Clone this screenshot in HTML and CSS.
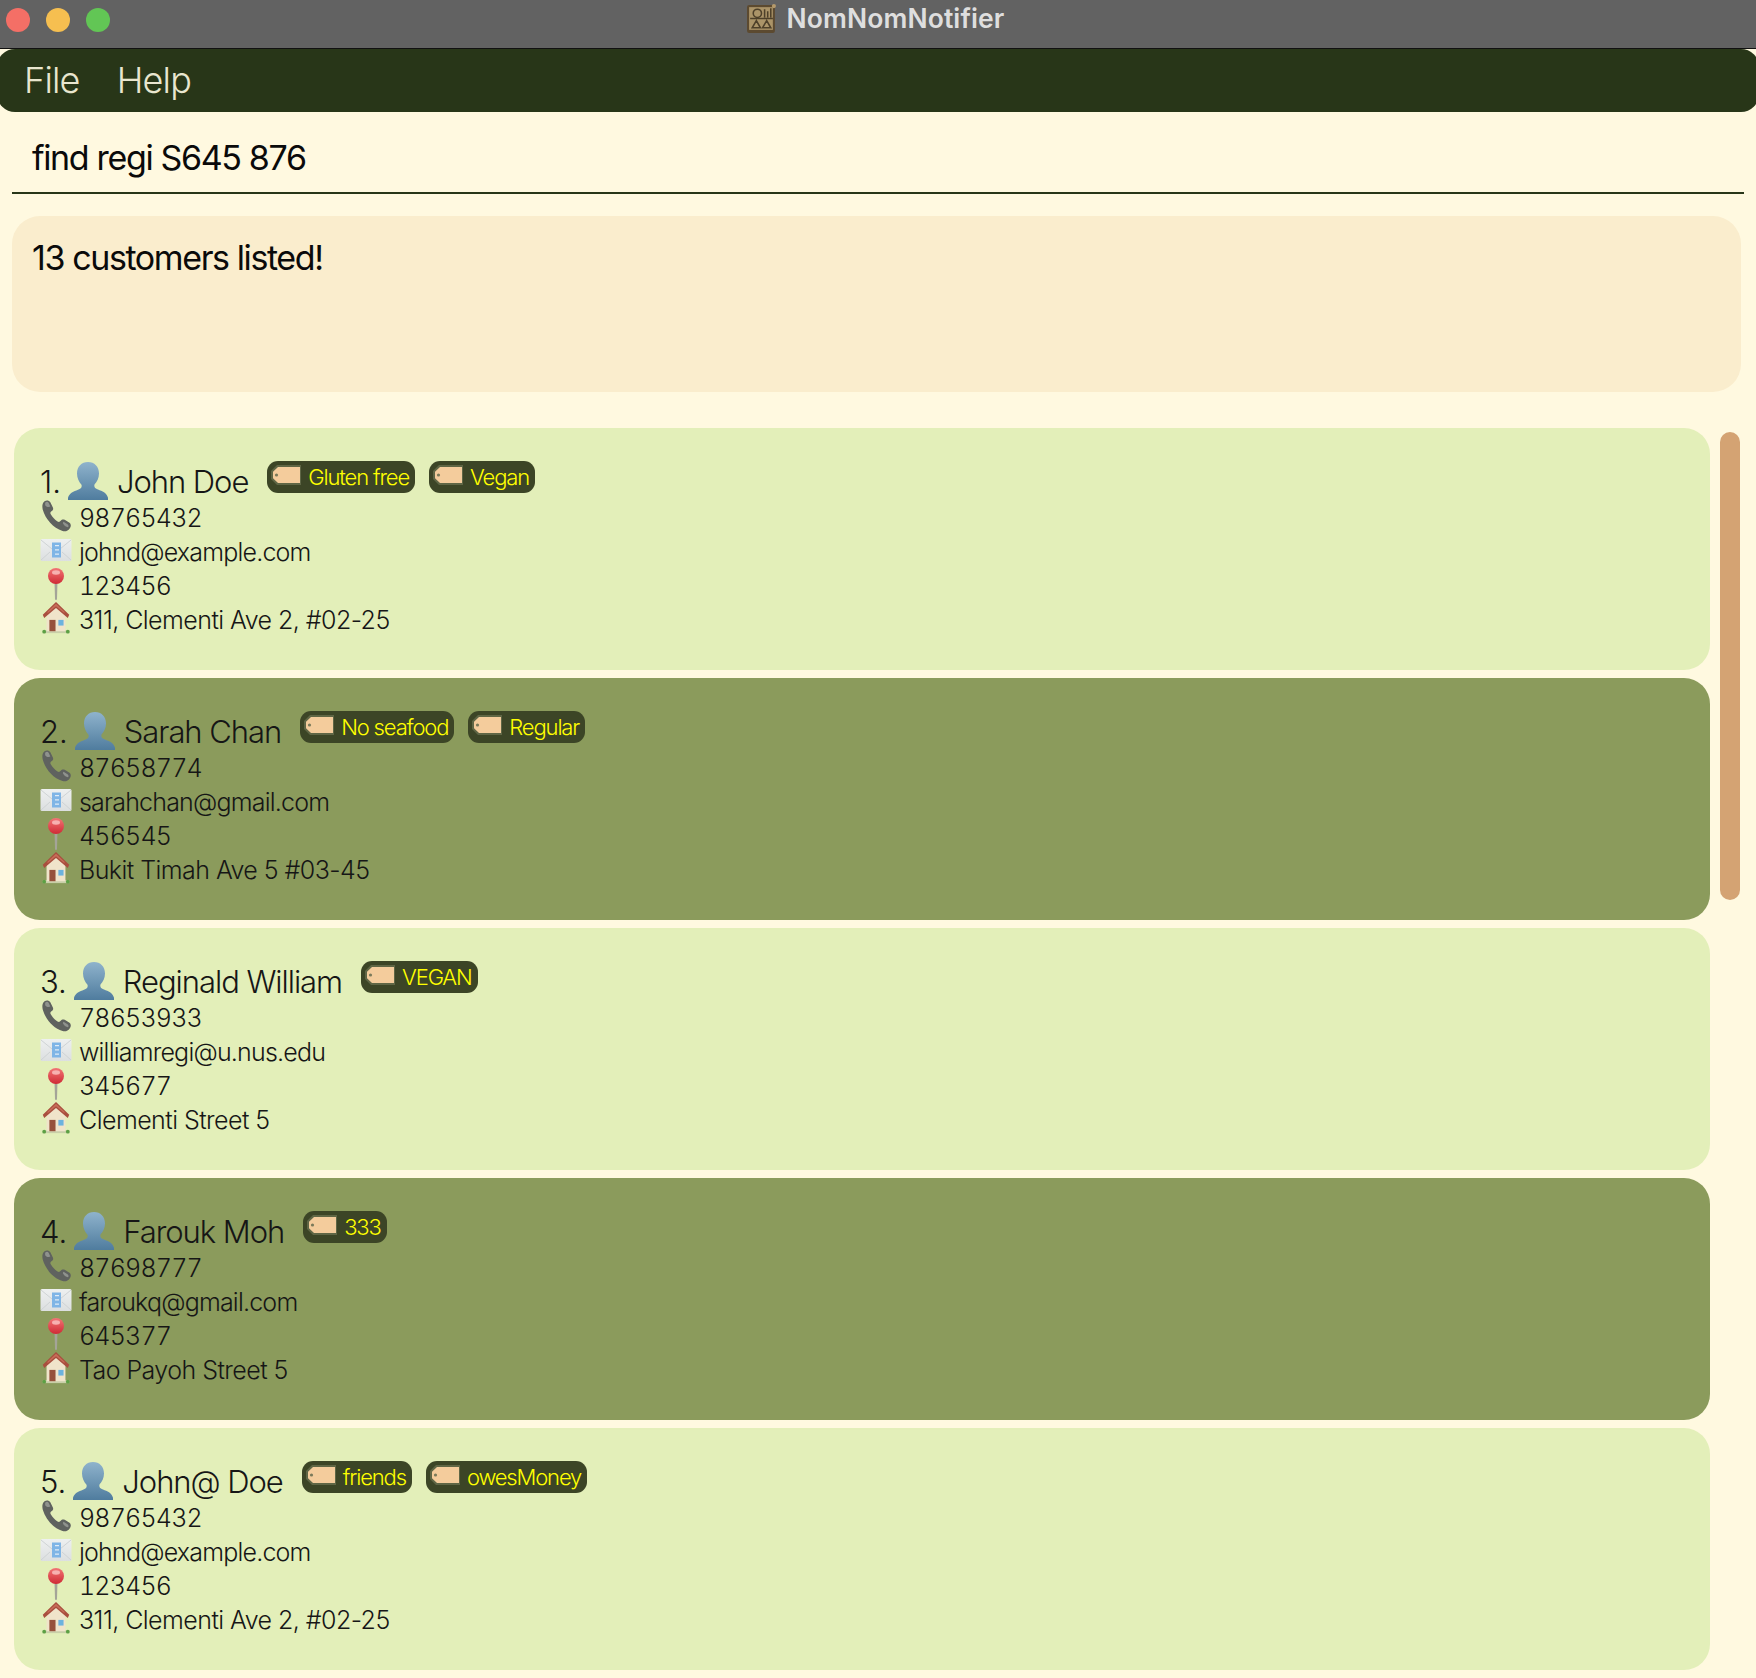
FILE: index.html
```html
<!DOCTYPE html>
<html lang="en">
<head>
<meta charset="utf-8">
<title>NomNomNotifier</title>
<link rel="stylesheet" href="styles.css">
</head>
<body>
<svg class="defs" aria-hidden="true">
  <defs>
    <linearGradient id="gPerson" x1="0" y1="0" x2="0" y2="1"><stop offset="0" stop-color="#8fb3cc"/><stop offset="1" stop-color="#4f7c9e"/></linearGradient>
    <linearGradient id="gPin" x1="0" y1="0" x2="0" y2="1"><stop offset="0" stop-color="#f27575"/><stop offset="1" stop-color="#cf2a35"/></linearGradient>
    <linearGradient id="gMail" x1="0" y1="0" x2="0" y2="1"><stop offset="0" stop-color="#eef0f0"/><stop offset="1" stop-color="#dcdfe0"/></linearGradient>
    <symbol id="i-person" viewBox="0 0 40 40"><path fill="url(#gPerson)" d="M20 1c6.500 0 11 4.500 11 11.500 0 4.500-2 8.500-4.500 11-.7 2.500.5 3.800 3.500 5 5 2 9.500 3.500 10.500 10.500H-.5C.5 32.300 5 30.800 10 28.800c3-1.200 4.200-2.500 3.500-5C11 21 9 17 9 12.500 9 5.500 13.500 1 20 1z"/></symbol>
    <symbol id="i-phone" viewBox="0 0 32 36"><path fill="#5f625f" d="M2 5C3.500 1 8 .5 10 3.500l2.700 5.500c.8 1.700 0 3-1.500 4-1.400.9-1.500 2-.6 3.500 1.800 3 4 5.400 7 7.300 1.300.8 2.500.6 3.400-.7 1-1.500 2.600-2 4.200-1l4.700 2.800c2 1.400 2.500 3.800.6 6.300-1.700 2.300-4.300 3.700-7.600 2.700C13 31 5 21.500 2 11.500 1.500 9 1.300 7 2 5z"/><path fill="#8f928e" d="M4.500 4C6 2.500 7.500 2.700 8.300 4.300L10 8c-1.500 1-4 .5-5.500-1.500zM24 24l4.500 3c1 .8 1 2 .2 3-2-.3-4.700-2-5.500-4.500z"/></symbol>
    <symbol id="i-mail" viewBox="0 0 32 26"><rect x="0.500" y="2" width="31" height="22" rx="1.500" fill="url(#gMail)"/><path fill="none" stroke="#cfd3d5" stroke-width="1" d="M1 3l11 9M31 3l-11 9M1 23l9-8M31 23l-9-8"/><path fill="#7fb5e6" d="M12 5.500h9V20.500h-9z"/><path fill="#e0ecf6" d="M15 8h4v1.300h-4zM15 12.300h4v1.300h-4zM15 16.500h4v1.300h-4z"/></symbol>
    <symbol id="i-pin" viewBox="0 0 32 34"><path fill="#a4a498" d="M14.500 14h3l-.5 18a1 1 0 0 1-2 0z"/><circle cx="16" cy="9" r="8" fill="url(#gPin)"/><ellipse cx="16" cy="5.500" rx="4" ry="2.200" fill="#f7b0b0"/></symbol>
    <symbol id="i-house" viewBox="0 0 32 36"><rect x="2" y="31" width="28" height="3" fill="#c9cfa8"/><circle cx="3.500" cy="32.500" r="2" fill="#5da044"/><circle cx="28.500" cy="32.500" r="2" fill="#5da044"/><path fill="#f0e4ca" d="M6 15L16 6l10 9v17H6z"/><path fill="#a94f3e" d="M16 1L2 14.500 3.500 18 16 7.500 28.500 18 30 14.500z"/><path fill="#c76d58" d="M16 3L7 11.500v1.500L16 5.500l9 7.500v-1.500z"/><path fill="#96503a" d="M9 20h6.500v12H9z"/><path fill="#6cb2de" d="M18.500 20H24v6h-5.500z"/></symbol>
    <symbol id="i-tag" viewBox="0 0 30 20"><path fill="#5f6645" d="M6 0h24v20H6L0 14V6z"/><path fill="#f4cc9c" d="M7 2h22v16H7l-5-4.800V6.800z"/><circle cx="5.500" cy="10" r="1.600" fill="#7a7a5a"/></symbol>
    <symbol id="i-logo" viewBox="0 0 30 30"><rect x="1" y="2" width="27" height="27" rx="2" fill="#5c4a30"/><rect x="3" y="4" width="23" height="22" fill="#ab9468"/><circle cx="11" cy="10" r="4" fill="none" stroke="#4e4029" stroke-width="1.500"/><path stroke="#4e4029" stroke-width="1.500" d="M18 6v8M21 8v6M24 5v9M4 15h22M10 17l-4 7h8zM20 17l-4 7h8z" fill="none"/><circle cx="27" cy="3" r="2" fill="#b59a6c"/></symbol>
  </defs>
</svg>

<header class="titlebar">
  <div class="lights">
    <span class="light light-red"></span>
    <span class="light light-amber"></span>
    <span class="light light-green"></span>
  </div>
  <div class="app-title">
    <svg class="logo"><use href="#i-logo"/></svg>
    <span>NomNomNotifier</span>
  </div>
</header>

<nav class="menubar">
  <span class="menu-item">File</span>
  <span class="menu-item">Help</span>
</nav>

<main class="window">
  <div class="command">find regi S645 876</div>
  <div class="result">13 customers listed!</div>

  <div class="list-area">
    <div class="list">

      <article class="card card-light">
        <div class="name-row">
          <span class="name-text index">1.</span>
          <svg class="ic-person"><use href="#i-person"/></svg>
          <span class="name-text">John Doe</span>
          <div class="tags">
            <span class="tag"><svg class="ic-tag"><use href="#i-tag"/></svg>Gluten free</span>
            <span class="tag"><svg class="ic-tag"><use href="#i-tag"/></svg>Vegan</span>
          </div>
        </div>
        <div class="row row-num"><svg class="ic"><use href="#i-phone"/></svg>98765432</div>
        <div class="row row-mail"><svg class="ic"><use href="#i-mail"/></svg>johnd@example.com</div>
        <div class="row row-num"><svg class="ic"><use href="#i-pin"/></svg>123456</div>
        <div class="row"><svg class="ic"><use href="#i-house"/></svg>311, Clementi Ave 2, #02-25</div>
      </article>

      <article class="card card-dark">
        <div class="name-row">
          <span class="name-text index">2.</span>
          <svg class="ic-person"><use href="#i-person"/></svg>
          <span class="name-text">Sarah Chan</span>
          <div class="tags">
            <span class="tag"><svg class="ic-tag"><use href="#i-tag"/></svg>No seafood</span>
            <span class="tag"><svg class="ic-tag"><use href="#i-tag"/></svg>Regular</span>
          </div>
        </div>
        <div class="row row-num"><svg class="ic"><use href="#i-phone"/></svg>87658774</div>
        <div class="row row-mail"><svg class="ic"><use href="#i-mail"/></svg>sarahchan@gmail.com</div>
        <div class="row row-num"><svg class="ic"><use href="#i-pin"/></svg>456545</div>
        <div class="row"><svg class="ic"><use href="#i-house"/></svg>Bukit Timah Ave 5 #03-45</div>
      </article>

      <article class="card card-light">
        <div class="name-row">
          <span class="name-text index">3.</span>
          <svg class="ic-person"><use href="#i-person"/></svg>
          <span class="name-text">Reginald William</span>
          <div class="tags">
            <span class="tag"><svg class="ic-tag"><use href="#i-tag"/></svg>VEGAN</span>
          </div>
        </div>
        <div class="row row-num"><svg class="ic"><use href="#i-phone"/></svg>78653933</div>
        <div class="row row-mail"><svg class="ic"><use href="#i-mail"/></svg>williamregi@u.nus.edu</div>
        <div class="row row-num"><svg class="ic"><use href="#i-pin"/></svg>345677</div>
        <div class="row"><svg class="ic"><use href="#i-house"/></svg>Clementi Street 5</div>
      </article>

      <article class="card card-dark">
        <div class="name-row">
          <span class="name-text index">4.</span>
          <svg class="ic-person"><use href="#i-person"/></svg>
          <span class="name-text">Farouk Moh</span>
          <div class="tags">
            <span class="tag"><svg class="ic-tag"><use href="#i-tag"/></svg>333</span>
          </div>
        </div>
        <div class="row row-num"><svg class="ic"><use href="#i-phone"/></svg>87698777</div>
        <div class="row row-mail"><svg class="ic"><use href="#i-mail"/></svg>faroukq@gmail.com</div>
        <div class="row row-num"><svg class="ic"><use href="#i-pin"/></svg>645377</div>
        <div class="row"><svg class="ic"><use href="#i-house"/></svg>Tao Payoh Street 5</div>
      </article>

      <article class="card card-light">
        <div class="name-row">
          <span class="name-text index">5.</span>
          <svg class="ic-person"><use href="#i-person"/></svg>
          <span class="name-text">John@ Doe</span>
          <div class="tags">
            <span class="tag"><svg class="ic-tag"><use href="#i-tag"/></svg>friends</span>
            <span class="tag"><svg class="ic-tag"><use href="#i-tag"/></svg>owesMoney</span>
          </div>
        </div>
        <div class="row row-num"><svg class="ic"><use href="#i-phone"/></svg>98765432</div>
        <div class="row row-mail"><svg class="ic"><use href="#i-mail"/></svg>johnd@example.com</div>
        <div class="row row-num"><svg class="ic"><use href="#i-pin"/></svg>123456</div>
        <div class="row"><svg class="ic"><use href="#i-house"/></svg>311, Clementi Ave 2, #02-25</div>
      </article>

    </div>
    <div class="scroll-track"><div class="scroll-thumb"></div></div>
  </div>
</main>
</body>
</html>
```
FILE: styles.css
```css
* { box-sizing: border-box; }

html, body {
  margin: 0;
  height: 1678px;
  overflow: hidden;
  background: #fff9e0;
  font-family: Inter, "Liberation Sans", sans-serif;
}

.defs { position: absolute; width: 0; height: 0; }

.titlebar {
  height: 49px;
  background: #626262;
  border-bottom: 1px solid #111;
  display: flex;
  align-items: center;
  justify-content: center;
  position: relative;
}

.lights {
  position: absolute;
  left: 6px;
  top: 8px;
  display: flex;
  gap: 16px;
}

.light { width: 24px; height: 24px; border-radius: 50%; }
.light-red { background: #f46f66; }
.light-amber { background: #f6bf50; }
.light-green { background: #62c655; }

.app-title {
  display: flex;
  align-items: center;
  gap: 10px;
  margin-bottom: 12px;
  margin-left: -6px;
  font-size: 26.5px;
  font-weight: 600;
  color: #dedede;
  letter-spacing: 0.1px;
}

.logo { width: 31px; height: 31px; }

.menubar {
  height: 63px;
  margin: 0 -3px;
  background: #283618;
  border-radius: 18px;
  display: flex;
  align-items: center;
  gap: 37px;
  padding: 0 0 2px 27px;
}

.menu-item {
  font-size: 36px;
  font-weight: 300;
  color: #e9e6cf;
  letter-spacing: -0.8px;
}

.window {
  display: flex;
  flex-direction: column;
  padding: 0 12px;
}

.command {
  height: 82px;
  padding: 10px 0 0 20px;
  display: flex;
  align-items: center;
  border-bottom: 2px solid #283618;
  font-size: 34px;
  color: #0a0a0a;
  letter-spacing: -1.35px;
}

.result {
  margin-top: 22px;
  margin-right: 3px;
  height: 176px;
  padding: 22px 20px;
  background: #faedcd;
  border-radius: 28px;
  font-size: 34px;
  line-height: 40px;
  color: #0a0a0a;
  letter-spacing: -1.4px;
}

.list-area {
  margin-top: 36px;
  display: flex;
  align-items: flex-start;
}

.list {
  margin-left: 2px;
  width: 1696px;
  display: flex;
  flex-direction: column;
  gap: 8px;
}

.card {
  height: 242px;
  padding: 33px 0 0 26px;
  border-radius: 26px;
  color: #161616;
}

.card-light { background: #e3efb9; }
.card-dark { background: #8b9b5c; }

.name-row {
  height: 40px;
  display: flex;
  align-items: flex-start;
}

.name-text {
  font-size: 31px;
  line-height: 42px;
  font-weight: 300;
  letter-spacing: -1.05px;
}

.index { letter-spacing: 0; }

.ic-person { width: 40px; height: 40px; margin: 0 9px 0 7px; }

.tags { display: flex; gap: 14px; margin-left: 19px; }

.tag {
  height: 32px;
  padding: 0 6px 0 4px;
  display: flex;
  align-items: center;
  gap: 7px;
  background: #3c4526;
  border-radius: 11px;
  color: #ffff00;
  font-size: 22px;
  font-weight: 300;
  letter-spacing: -1.15px;
}

.ic-tag { width: 30px; height: 20px; margin-top: -5px; }

.row {
  height: 34px;
  display: flex;
  align-items: center;
  gap: 7px;
  font-size: 25px;
  font-weight: 300;
  letter-spacing: -0.55px;
}

.row-num {
  font-variant-numeric: tabular-nums;
  letter-spacing: -0.8px;
}

.row-mail { letter-spacing: -0.8px; }

.ic { width: 32px; height: 34px; margin-top: -4px; }

.scroll-track {
  margin-left: 10px;
  padding-top: 4px;
}

.scroll-thumb {
  width: 20px;
  height: 468px;
  background: #d4a373;
  border-radius: 10px;
}
```
